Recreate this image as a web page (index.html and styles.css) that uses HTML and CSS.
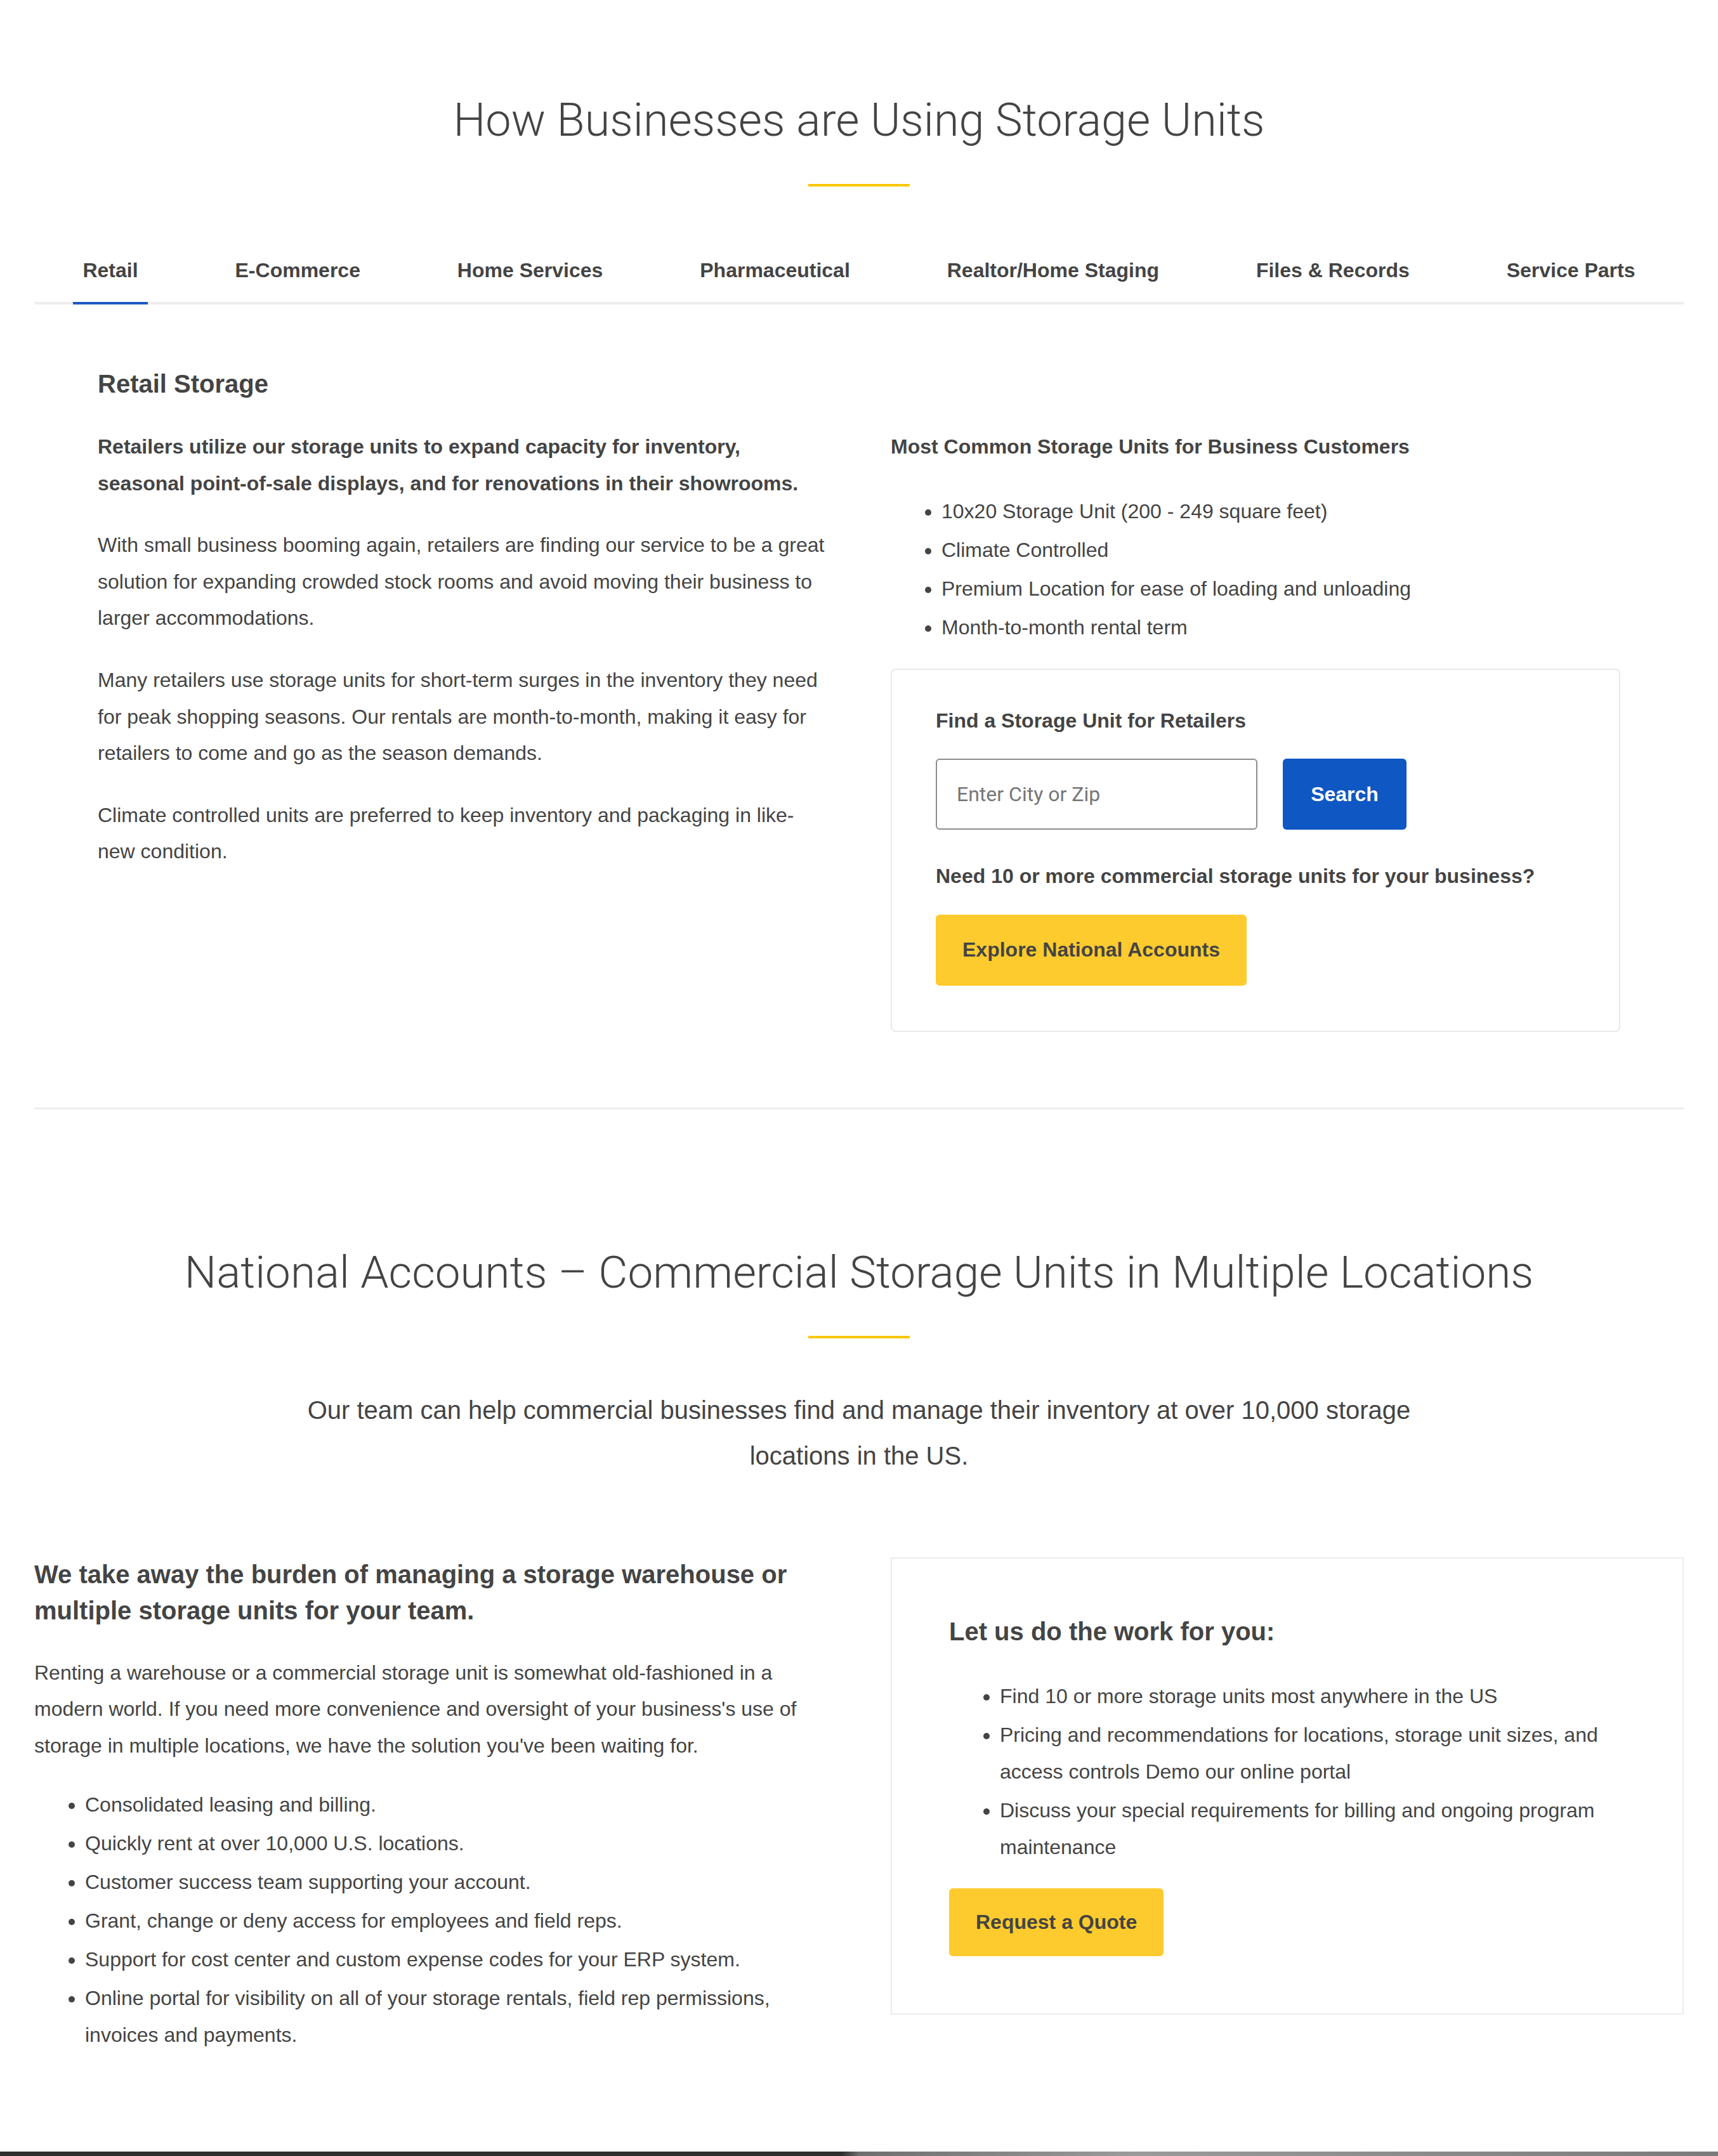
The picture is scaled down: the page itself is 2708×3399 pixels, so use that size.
FILE: index.html
```html
<!DOCTYPE html>
<html lang="en">
<head>
<meta charset="utf-8">
<title>How Businesses are Using Storage Units</title>
<link rel="stylesheet" href="styles.css">
</head>
<body>
<main class="page">
  <section class="uses">
    <h2 class="section-title">How Businesses are Using Storage Units</h2>
    <div class="title-rule"></div>
    <nav class="tabs">
      <a class="tab active" href="#">Retail</a>
      <a class="tab" href="#">E-Commerce</a>
      <a class="tab" href="#">Home Services</a>
      <a class="tab" href="#">Pharmaceutical</a>
      <a class="tab" href="#">Realtor/Home Staging</a>
      <a class="tab" href="#">Files &amp; Records</a>
      <a class="tab" href="#">Service Parts</a>
    </nav>
    <div class="panel">
      <h3 class="panel-title">Retail Storage</h3>
      <div class="cols">
        <div class="col">
          <p class="strong">Retailers utilize our storage units to expand capacity for inventory, seasonal point-of-sale displays, and for renovations in their showrooms.</p>
          <p>With small business booming again, retailers are finding our service to be a great solution for expanding crowded stock rooms and avoid moving their business to larger accommodations.</p>
          <p>Many retailers use storage units for short-term surges in the inventory they need for peak shopping seasons. Our rentals are month-to-month, making it easy for retailers to come and go as the season demands.</p>
          <p>Climate controlled units are preferred to keep inventory and packaging in like-new condition.</p>
        </div>
        <div class="col">
          <p class="strong units-title">Most Common Storage Units for Business Customers</p>
          <ul class="bullets bullets-units">
            <li>10x20 Storage Unit (200 - 249 square feet)</li>
            <li>Climate Controlled</li>
            <li>Premium Location for ease of loading and unloading</li>
            <li>Month-to-month rental term</li>
          </ul>
          <div class="finder">
            <p class="strong finder-title">Find a Storage Unit for Retailers</p>
            <form class="search-row" onsubmit="return false;">
              <input class="search-input" type="text" placeholder="Enter City or Zip">
              <button class="btn btn-blue" type="submit">Search</button>
            </form>
            <p class="strong finder-note">Need 10 or more commercial storage units for your business?</p>
            <a class="btn btn-yellow" href="#">Explore National Accounts</a>
          </div>
        </div>
      </div>
    </div>
  </section>

  <hr class="divider">

  <section class="national">
    <h2 class="section-title section-title-wide">National Accounts – Commercial Storage Units in Multiple Locations</h2>
    <div class="title-rule"></div>
    <p class="subtitle">Our team can help commercial businesses find and manage their inventory at over 10,000 storage locations in the US.</p>
    <div class="cols2">
      <div class="col">
        <h3 class="work-title">We take away the burden of managing a storage warehouse or multiple storage units for your team.</h3>
        <p class="intro">Renting a warehouse or a commercial storage unit is somewhat old-fashioned in a modern world. If you need more convenience and oversight of your business's use of storage in multiple locations, we have the solution you've been waiting for.</p>
        <ul class="bullets bullets-flat">
          <li>Consolidated leasing and billing.</li>
          <li>Quickly rent at over 10,000 U.S. locations.</li>
          <li>Customer success team supporting your account.</li>
          <li>Grant, change or deny access for employees and field reps.</li>
          <li>Support for cost center and custom expense codes for your ERP system.</li>
          <li>Online portal for visibility on all of your storage rentals, field rep permissions, invoices and payments.</li>
        </ul>
      </div>
      <div class="col">
        <div class="work-box">
          <h3 class="box-title">Let us do the work for you:</h3>
          <ul class="bullets bullets-box">
            <li>Find 10 or more storage units most anywhere in the US</li>
            <li>Pricing and recommendations for locations, storage unit sizes, and access controls Demo our online portal</li>
            <li>Discuss your special requirements for billing and ongoing program maintenance</li>
          </ul>
          <a class="btn btn-yellow btn-quote" href="#">Request a Quote</a>
        </div>
      </div>
    </div>
  </section>
</main>
<footer class="footer"></footer>
</body>
</html>
```

FILE: styles.css
```css
* {
  box-sizing: border-box;
}

body {
  margin: 0;
  background: #ffffff;
  color: #444444;
  font-family: "Liberation Sans", Arial, Helvetica, sans-serif;
}

.page {
  width: 2600px;
  margin: 0 auto;
}

.section-title {
  margin: 0;
  font-family: Roboto, "Liberation Sans", Arial, sans-serif;
  font-weight: 300;
  font-size: 72px;
  line-height: 84px;
  text-align: center;
  color: #444444;
}

.section-title-wide {
  font-size: 71px;
}

.title-rule {
  width: 160px;
  height: 4px;
  margin: 58px auto 0;
  background: #fcc800;
}

/* ---------- section 1 ---------- */

.uses {
  padding-top: 148px;
}

.tabs {
  display: flex;
  justify-content: space-around;
  margin-top: 113px;
  border-bottom: 4px solid #eeeeee;
}

.tab {
  padding: 0 15px 31px;
  margin-bottom: -4px;
  border-bottom: 4px solid transparent;
  font-size: 32px;
  font-weight: 700;
  line-height: 38px;
  color: #444444;
  text-decoration: none;
  white-space: nowrap;
}

.tab.active {
  border-bottom-color: #1f57c3;
}

.panel {
  padding: 101px 100px 119px;
}

.panel-title {
  margin: 0 0 47px;
  font-size: 40px;
  line-height: 48px;
  font-weight: 700;
}

.cols,
.cols2 {
  display: grid;
  grid-template-columns: 1fr 1fr;
  column-gap: 100px;
  align-items: start;
}

p {
  margin: 0 0 40px;
  font-size: 32px;
  line-height: 57.6px;
}

.col > :last-child {
  margin-bottom: 0;
}

.strong {
  font-weight: 700;
}

.units-title {
  margin-bottom: 43px;
}

.bullets {
  margin: 0;
  padding-left: 80px;
}

.bullets li {
  margin-bottom: 3px;
  font-size: 32px;
  line-height: 58px;
}

.bullets li:last-child {
  margin-bottom: 0;
}

.bullets-units {
  margin-bottom: 36px;
}

.finder {
  padding: 52px 69px 71px;
  border: 2px solid #e9e9e9;
  border-radius: 8px;
}

.finder-title {
  margin-bottom: 31px;
}

.search-row {
  display: flex;
  align-items: center;
  gap: 40px;
  margin: 0;
}

.search-input {
  width: 507px;
  height: 112px;
  padding: 0 31px;
  border: 2px solid #8c8c8c;
  border-radius: 6px;
  font-family: Roboto, "Liberation Sans", Arial, sans-serif;
  font-size: 32px;
  color: #444444;
  background: #ffffff;
  outline: none;
}

.search-input::placeholder {
  color: #767676;
}

.btn {
  display: inline-flex;
  align-items: center;
  justify-content: center;
  height: 112px;
  padding: 0 42px;
  border: 0;
  border-radius: 6px;
  font-family: "Liberation Sans", Arial, sans-serif;
  font-size: 32px;
  font-weight: 700;
  text-decoration: none;
  cursor: pointer;
}

.btn-blue {
  width: 195px;
  padding: 0;
  background: #0f57c2;
  color: #ffffff;
}

.btn-yellow {
  background: #fecb2e;
  color: #444444;
}

.finder-note {
  margin: 45px 0 31px;
}

.divider {
  height: 3px;
  margin: 0;
  border: 0;
  background: #eeeeee;
}

/* ---------- section 2 ---------- */

.national {
  padding: 215px 0 155px;
}

.subtitle {
  max-width: 1800px;
  margin: 77px auto 0;
  font-size: 40px;
  line-height: 72px;
  text-align: center;
}

.cols2 {
  margin-top: 123px;
}

.work-title {
  margin: 0 0 41px;
  font-size: 40px;
  line-height: 57px;
  font-weight: 700;
}

.intro {
  margin-bottom: 34px;
}

.work-box {
  margin-top: 1px;
  padding: 87px 90px 90px;
  border: 2px solid #ececec;
}

.box-title {
  margin: 0 0 44px;
  font-size: 40px;
  line-height: 57px;
  font-weight: 700;
}

.bullets-box {
  margin-bottom: 36px;
}

.btn-quote {
  height: 107px;
}

.footer {
  height: 200px;
  background: linear-gradient(to right, #2d2d2d 0%, #2d2d2d 49%, #6e6e6e 50%, #9a9a9a 66%, #7a7a7a 100%);
}
```
